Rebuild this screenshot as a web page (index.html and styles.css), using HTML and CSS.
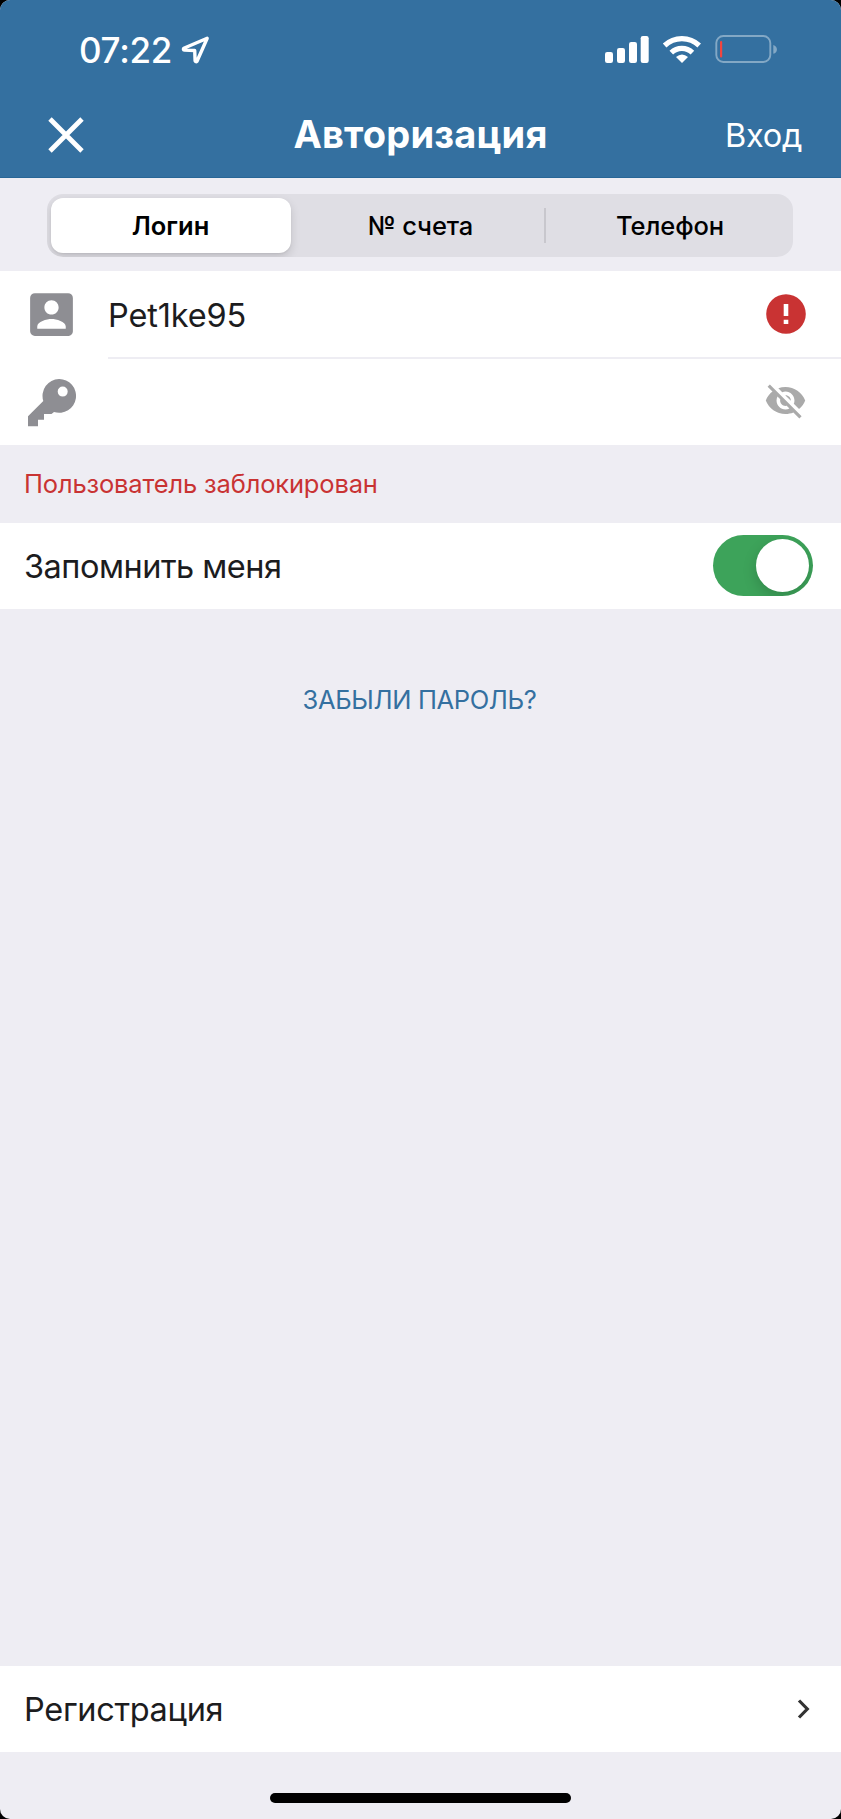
FILE: index.html
```html
<!DOCTYPE html>
<html lang="ru">
<head>
<meta charset="utf-8">
<title>Авторизация</title>
<link rel="stylesheet" href="styles.css">
</head>
<body>
<div class="screen">
  <header class="header">
    <div class="status">
      <span class="clock">07:22</span>
      <svg class="location" width="30" height="30" viewBox="0 0 30 30"><path d="M26.2 3.2 2.8 13.3Q1.8 14.8 3.4 15.1L13.7 15.5 14.1 25.8Q14.8 27.4 16 26.2Z" fill="none" stroke="#fff" stroke-width="3.4" stroke-linejoin="round"/></svg>
      <svg class="indicators" width="180" height="32" viewBox="600 33 180 32">
        <g fill="#fff">
          <rect x="605" y="52" width="8" height="11" rx="2.2"/>
          <rect x="617" y="48" width="8" height="15" rx="2.2"/>
          <rect x="629" y="42" width="8" height="21" rx="2.2"/>
          <rect x="640.7" y="36" width="8" height="27" rx="2.2"/>
          <path d="M682 63 676 57Q682 51.8 688 57Z"/>
        </g>
        <g fill="none" stroke="#fff" stroke-width="5.2">
          <path d="M671.3 52.7a15.2 15.2 0 0 1 21.1 0"/>
          <path d="M664.6 45.5a25.2 25.2 0 0 1 34.6 0"/>
        </g>
        <rect x="716.3" y="36" width="54" height="26" rx="7" fill="none" stroke="#83a8c5" stroke-width="1.9"/>
        <path d="M773.3 45v8.8q3.6-1.3 3.6-4.4t-3.6-4.4z" fill="#83a8c5"/>
        <rect x="720" y="41" width="2.2" height="16.5" rx="1" fill="#f2453f"/>
      </svg>
    </div>
    <div class="navbar">
      <svg class="close" width="36" height="36" viewBox="0 0 36 36"><path d="M2 2 34 34M34 2 2 34" stroke="#fff" stroke-width="4.8"/></svg>
      <h1 class="title">Авторизация</h1>
      <span class="enter">Вход</span>
    </div>
  </header>

  <div class="tabs-row">
    <div class="tabs">
      <div class="tab tab-active"><span class="tab-login">Логин</span></div>
      <div class="tab tab-account"><span>№ счета</span></div>
      <i class="divider"></i>
      <div class="tab tab-phone"><span>Телефон</span></div>
    </div>
  </div>

  <div class="row field">
    <svg class="account" width="57" height="57" viewBox="0 0 24 24" fill="#8e8e93"><path d="M3 5v14a2 2 0 0 0 2 2h14c1.1 0 2-.9 2-2V5a2 2 0 0 0-2-2H5a2 2 0 0 0-2 2zm12 4c0 1.66-1.34 3-3 3s-3-1.34-3-3 1.34-3 3-3 3 1.34 3 3zm-9 8c0-2 4-3.1 6-3.1s6 1.1 6 3.1v1H6v-1z"/></svg>
    <span class="username">Pet1ke95</span>
    <svg class="trailing" width="48" height="48" viewBox="0 0 24 24" fill="#c93333"><path d="M12 2.1a9.9 9.9 0 1 0 0 19.8 9.9 9.9 0 0 0 0-19.8zm1.15 14.9h-2.3v-2.1h2.3zm0-4h-2.3V7h2.3z"/></svg>
  </div>
  <div class="row password">
    <svg class="key" width="48" height="48" viewBox="28 379 48 48"><path fill="#8e8e93" fill-rule="evenodd" d="M59 379a16.9 16.9 0 1 1-5 33l-2.5 2h-7.500v5.7h-6v6.6H28v-10L43.3 401A16.9 16.9 0 0 1 59 379zm3.7 7.6a5 5 0 1 0 0 10 5 5 0 0 0 0-10z"/></svg>
    <svg class="trailing eye" width="43" height="43" viewBox="0 0 24 24" fill="#aaa"><path d="M12 7c2.76 0 5 2.24 5 5 0 .65-.13 1.26-.36 1.83l2.92 2.92c1.51-1.26 2.7-2.89 3.43-4.75-1.73-4.39-6-7.5-11-7.5-1.4 0-2.74.25-3.98.7l2.16 2.16C10.74 7.13 11.35 7 12 7zM2 4.27l2.28 2.28.46.46C3.08 8.3 1.78 10.02 1 12c1.73 4.39 6 7.5 11 7.5 1.55 0 3.03-.3 4.38-.84l.42.42L19.73 22 21 20.73 3.27 3 2 4.27zM7.53 9.8l1.55 1.55c-.05.21-.08.43-.08.65 0 1.66 1.34 3 3 3 .22 0 .44-.03.65-.08l1.55 1.55c-.67.33-1.41.53-2.2.53-2.76 0-5-2.24-5-5 0-.79.2-1.53.53-2.2zm4.31-.78 3.15 3.15.02-.16c0-1.66-1.34-3-3-3l-.17.01z"/></svg>
  </div>

  <div class="error"><span class="error-text">Пользователь заблокирован</span></div>

  <div class="row remember">
    <span class="remember-text">Запомнить меня</span>
    <div class="switch"><i class="knob"></i></div>
  </div>

  <div class="forgot"><span class="forgot-text">ЗАБЫЛИ ПАРОЛЬ?</span></div>

  <div class="row register">
    <span class="register-text">Регистрация</span>
    <svg class="chevron" width="14" height="22" viewBox="0 0 14 22"><path d="M2 2.5 10.3 11 2 19.500" fill="none" stroke="#333" stroke-width="3.2"/></svg>
  </div>
  <footer class="footer"><i class="home"></i></footer>
</div>
</body>
</html>
```
FILE: styles.css
```css
* { box-sizing: border-box; }
body { margin: 0; background: #000; font-family: Inter, "Noto Sans", sans-serif; }
svg { display: block; flex: none; }
span, h1 { white-space: nowrap; }
.screen { width: 841px; height: 1819px; display: flex; flex-direction: column; overflow: hidden; border-radius: 10px; background: #eeedf3; color: #1c1c1e; }

.header { height: 178px; flex: none; background: #3470a0; color: #fff; border-bottom: 1px solid #286696; }
.status { display: flex; align-items: center; height: 100px; padding-left: 79px; }
.clock { width: 102px; font-size: 35px; font-weight: 550; line-height: 42px; letter-spacing: -.3px; }
.indicators { margin: 0 61px 2px auto; }
.navbar { display: grid; grid-template-columns: 1fr auto 1fr; align-items: center; height: 70px; padding: 0 39px 0 39px; }
.close { margin-left: 9px; }
.title { margin: 0 0 3px; font-size: 38px; font-weight: 700; line-height: 46px; letter-spacing: .2px; }
.enter { justify-self: end; margin-top: 2px; font-size: 32.500px; line-height: 40px; letter-spacing: -.3px; }

.tabs-row { height: 93px; flex: none; padding: 16px 48px 14px 47px; }
.tabs { display: grid; grid-template-columns: 247px 250px 2px 247px; align-items: center; height: 63px; border-radius: 16px; background: #dfdee4; overflow: hidden; color: #000; font-size: 25.500px; font-weight: 500; }
.tab { display: flex; align-items: center; justify-content: center; height: 55px; line-height: 32px; }
.tab-active { width: 240px; margin-left: 4px; padding-right: 1px; border-radius: 12px; background: #fff; font-weight: 600; box-shadow: 0 4px 10px rgba(0,0,0,.14), 0 1px 2px rgba(0,0,0,.06); }
.tab-account { padding-left: 3px; letter-spacing: -.1px; }
.tab-phone { padding-left: 1px; letter-spacing: -.1px; }
.divider { width: 2px; height: 35px; background: #c8c7cd; }

.row { display: flex; align-items: center; flex: none; height: 87px; background: #fff; font-size: 32.500px; line-height: 40px; }
.field { padding: 0 31px 0 23px; height: 86px; }
.username { margin: 3px 0 0 28px; letter-spacing: -.15px; }
.trailing { margin-left: auto; }
.password { height: 88px; padding: 0 34px 0 28px; background: linear-gradient(#eeedf3, #eeedf3) 108px 0 / 733px 2px no-repeat #fff; }
.key { margin-top: 4px; }
.eye { margin-bottom: 2px; }
.error { display: flex; align-items: center; flex: none; height: 78px; padding-left: 24px; color: #c93333; font-size: 25.500px; line-height: 32px; letter-spacing: -.16px; }
.remember { height: 86px; padding: 0 28px 0 24px; }
.remember-text { margin-top: 2px; letter-spacing: -.5px; }
.switch { width: 100px; height: 61px; margin: 0 0 1px auto; padding: 4px; border-radius: 31px; background: #3da35a; overflow: hidden; }
.knob { display: block; width: 53px; height: 53px; margin-left: auto; border-radius: 50%; background: #fff; box-shadow: 0 5px 14px rgba(0,0,0,.17); }
.forgot { display: flex; justify-content: center; padding: 75px 2px 0 0; flex: 1; color: #3470a0; font-size: 25.500px; line-height: 32px; letter-spacing: -.35px; }
.register { height: 86px; padding: 0 30px 0 24px; }
.register-text { margin-top: 2px; letter-spacing: -.32px; }
.chevron { margin-left: auto; }
.footer { flex: none; height: 67px; padding-top: 41px; }
.home { display: block; width: 301px; height: 10px; margin: 0 auto; border-radius: 5px; background: #000; }
```
